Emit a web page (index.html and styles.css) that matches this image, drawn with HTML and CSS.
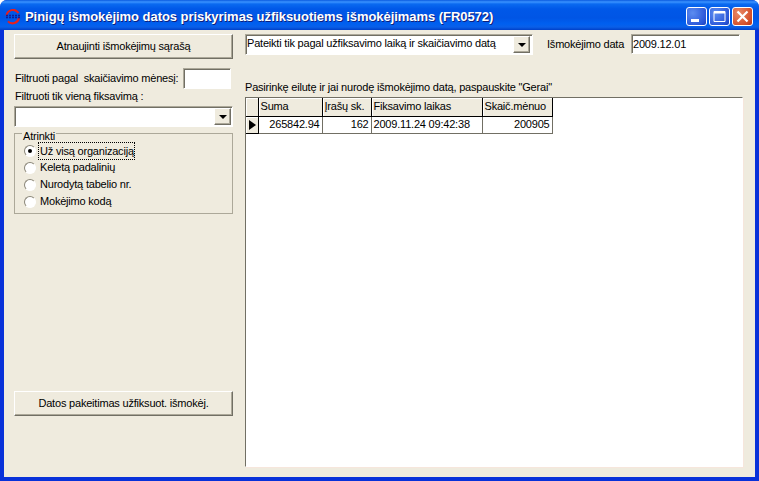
FILE: index.html
```html
<!DOCTYPE html>
<html lang="lt">
<head>
<meta charset="utf-8">
<title>Pinigų išmokėjimo datos priskyrimas</title>
<link rel="stylesheet" href="styles.css">
</head>
<body>
<div class="window">
  <header class="titlebar">
    <svg class="app-icon" width="16" height="16" viewBox="0 0 16 16"><path d="M1.5 7a6.5 6.5 0 0 1 12-3" fill="none" stroke="#e8201c" stroke-width="2"/><path d="M14 9a6.5 6.5 0 0 1-11 3.4" fill="none" stroke="#e8201c" stroke-width="2"/><path d="M1 6.5h14M1 8.5h14" stroke="#0b1f9c" stroke-width="1.3" stroke-dasharray="2 1"/></svg>
    <span class="title">Pinigų išmokėjimo datos priskyrimas užfiksuotiems išmokėjimams (FR0572)</span>
    <div class="controls">
      <div class="ctl ctl-blue"><svg width="21" height="19" viewBox="0 0 21 19"><rect x="5" y="12" width="8" height="3" fill="#fff"/></svg></div>
      <div class="ctl ctl-blue"><svg width="21" height="19" viewBox="0 0 21 19"><path d="M5 4.5h11v10H5z" fill="none" stroke="#fff"/><path d="M5 5.5h11" stroke="#fff" stroke-width="2"/></svg></div>
      <div class="ctl ctl-red"><svg width="21" height="19" viewBox="0 0 21 19"><path d="M5.5 4.5l10 10M15.5 4.5l-10 10" stroke="#fff" stroke-width="2.2"/></svg></div>
    </div>
  </header>
  <main class="client">
    <aside class="left">
      <button class="btn">Atnaujinti išmokėjimų sąrašą</button>
      <div class="filter-row">
        <span>Filtruoti pagal&nbsp; skaičiavimo mėnesį:</span>
        <div class="field month"></div>
      </div>
      <div class="label-one">Filtruoti tik vieną fiksavimą :</div>
      <div class="field combo wide">
        <span class="combo-text"></span>
        <span class="arrow arrow-low"><i></i></span>
      </div>
      <fieldset class="group">
        <legend>Atrinkti</legend>
        <div class="radio"><span class="dot on"></span><span class="focus">Už visą organizaciją</span></div>
        <div class="radio"><span class="dot"></span><span class="rlabel">Keletą padalinių</span></div>
        <div class="radio"><span class="dot"></span><span class="rlabel">Nurodytą tabelio nr.</span></div>
        <div class="radio"><span class="dot"></span><span class="rlabel">Mokėjimo kodą</span></div>
      </fieldset>
      <button class="btn btn-bottom">Datos pakeitimas užfiksuot. išmokėj.</button>
    </aside>
    <section class="right">
      <div class="top-row">
        <div class="field combo main-combo">
          <span class="combo-text">Pateikti tik pagal užfiksavimo laiką ir skaičiavimo datą</span>
          <span class="arrow arrow-high"><i></i></span>
        </div>
        <span class="date-label">Išmokėjimo data</span>
        <div class="field date">2009.12.01</div>
      </div>
      <div class="hint">Pasirinkę eilutę ir jai nurodę išmokėjimo datą, paspauskite "Gerai"</div>
      <div class="grid">
        <table>
          <thead>
            <tr><th class="ind"></th><th class="c1">Suma</th><th class="c2">Įrašų sk.</th><th class="c3">Fiksavimo laikas</th><th class="c4">Skaič.mėnuo</th></tr>
          </thead>
          <tbody>
            <tr><th class="ind"><i class="pointer"></i></th><td class="num">265842.94</td><td class="num">162</td><td>2009.11.24 09:42:38</td><td class="num">200905</td></tr>
          </tbody>
        </table>
      </div>
    </section>
  </main>
</div>
</body>
</html>
```

FILE: styles.css
```css
* { box-sizing: border-box; }
html, body { margin: 0; padding: 0; }
body {
  width: 759px;
  height: 481px;
  overflow: hidden;
  font: 11px/13px "Liberation Sans", Arial, sans-serif;
  letter-spacing: -0.2px;
  color: #000;
}
.window {
  width: 759px;
  height: 481px;
  display: flex;
  flex-direction: column;
  background: #0831d9;
  border-radius: 7px 7px 0 0;
  overflow: hidden;
}
.titlebar {
  height: 30px;
  flex: none;
  display: flex;
  align-items: center;
  padding: 3px 6px 0 5px;
  background: linear-gradient(#0a5adf 0, #3a93ff 2px, #0a6af0 4px, #0058e8 9px, #0055e5 18px, #0060f0 24px, #0a5fe8 27px, #0040c8 30px);
}
.app-icon { flex: none; }
.title {
  margin-left: 4px;
  font: bold 13px/16px "Liberation Sans", Arial, sans-serif;
  letter-spacing: -0.05px;
  color: #fff;
  text-shadow: 1px 1px 0 #0f1f7a;
  white-space: nowrap;
  flex: 1;
}
.controls { display: flex; gap: 2px; flex: none; }
.ctl {
  width: 21px;
  height: 19px;
  border: 1px solid #fff;
  border-radius: 3px;
  display: flex;
  align-items: center;
  justify-content: center;
}
.ctl svg { flex: none; margin: -1px; }
.ctl-blue { background: radial-gradient(circle at 30% 30%, #5c8cf0, #2a56d8 75%, #1c3fb8); }
.ctl-red { background: radial-gradient(circle at 30% 30%, #e88a68, #d5512c 70%, #b83418); }
.client {
  flex: none;
  height: 447px;
  margin: 0 4px;
  background: #efebde;
  display: flex;
  padding: 4px 12px 10px 10px;
  gap: 12px;
}
.left { width: 219px; flex: none; display: flex; flex-direction: column; }
.right { flex: 1; display: flex; flex-direction: column; min-width: 0; }
.btn {
  width: 219px;
  height: 25px;
  padding: 0;
  flex: none;
  font: inherit;
  letter-spacing: inherit;
  text-align: center;
  color: #000;
  background: #efebde;
  border: 1px solid;
  border-color: #fff #716f64 #716f64 #fff;
  box-shadow: inset -1px -1px 0 #aca899;
}
.btn-bottom { margin-top: 177px; }
.filter-row {
  display: flex;
  justify-content: space-between;
  align-items: center;
  margin-top: 9px;
  padding: 0 2px 0 1px;
  height: 21px;
  flex: none;
  white-space: nowrap;
}
.field {
  background: #fff;
  border: 1px solid;
  border-color: #aca899 #fff #fff #aca899;
  box-shadow: inset 1px 1px 0 #716f64;
}
.month { width: 48px; height: 21px; flex: none; }
.label-one { padding-left: 1px; height: 15px; line-height: 15px; flex: none; }
.combo {
  display: flex;
  justify-content: space-between;
  padding: 0 1px 0 1px;
  white-space: nowrap;
}
.combo-text { line-height: 17px; }
.wide { width: 219px; height: 21px; margin-top: 2px; flex: none; align-items: flex-end; padding-bottom: 1px; }
.arrow {
  width: 17px;
  height: 17px;
  background: #efebde;
  border: 1px solid;
  border-color: #fff #716f64 #716f64 #fff;
  box-shadow: inset -1px -1px 0 #aca899;
  display: flex;
  align-items: center;
  justify-content: center;
  flex: none;
}
.arrow-high { margin: 1px 1px 0 0; }
.arrow-low { margin: 0; }
.arrow i {
  width: 0;
  height: 0;
  border: 4px solid transparent;
  border-top: 4px solid #000;
  border-bottom: 0;
}
.group {
  margin: 5px 0 0;
  padding: 7px 0 0 9px;
  height: 82px;
  flex: none;
  border: 1px solid #aca899;
  min-width: 0;
}
.group legend {
  padding: 0 1px;
  margin-left: -2px;
  line-height: 9px;
  height: 3px;
}
.radio {
  display: flex;
  align-items: center;
  height: 17px;
  white-space: nowrap;
}
.dot {
  width: 12px;
  height: 12px;
  flex: none;
  border-radius: 50%;
  border: 1px solid;
  border-color: #8a8678 #fff #fff #8a8678;
  background: #fff;
  display: flex;
  align-items: center;
  justify-content: center;
  margin-right: 3px;
}
.dot.on::after {
  content: "";
  width: 4px;
  height: 4px;
  border-radius: 50%;
  background: #000;
}
.focus { outline: 1px dotted #000; padding: 2px 0 1px 1px; }
.rlabel { padding-left: 1px; }
.top-row { display: flex; align-items: flex-start; height: 21px; flex: none; }
.main-combo { width: 288px; height: 21px; }
.date-label { margin-left: 14px; line-height: 20px; width: 84px; white-space: nowrap; }
.date { width: 109px; height: 20px; padding: 2px 0 0 1px; line-height: 14px; }
.hint { margin-top: 26px; height: 16px; line-height: 13px; white-space: nowrap; flex: none; }
.grid {
  width: 498px;
  height: 370px;
  flex: none;
  background: #fff;
  border: 1px solid;
  border-color: #716f64 #fff #fff #716f64;
  box-shadow: 1px 1px 0 #f6e6dc;
}
.grid table { border-collapse: collapse; table-layout: fixed; width: 306px; }
.grid th, .grid td {
  padding: 0 2px;
  font-weight: normal;
  text-align: left;
  white-space: nowrap;
  overflow: hidden;
}
.grid thead th {
  height: 18px;
  background: #efebde;
  border-right: 1px solid #000;
  border-bottom: 1px solid #000;
  box-shadow: inset 1px 1px 0 #fff;
}
.grid tbody th, .grid td { height: 17px; }
.grid tbody th { background: #efebde; border-right: 1px solid #000; border-bottom: 1px solid #000; padding: 0; box-shadow: inset 1px 1px 0 #fff; }
.grid td { border-right: 1px solid #716f64; border-bottom: 1px solid #716f64; }
.ind { width: 12px; }
.c1 { width: 64px; }
.c2 { width: 49px; }
.c3 { width: 111px; }
.c4 { width: 70px; }
.grid .num { text-align: right; }
.pointer {
  display: block;
  width: 0;
  height: 0;
  margin-left: 3px;
  border: 5px solid transparent;
  border-left: 7px solid #000;
  border-right: 0;
}
```
